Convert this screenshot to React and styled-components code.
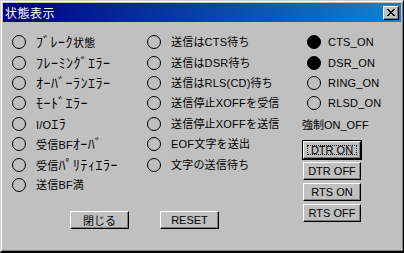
import React from "react";
import styled, { createGlobalStyle } from "styled-components";

const leftItems = [
  "ﾌﾞﾚｰｸ状態",
  "ﾌﾚｰﾐﾝｸﾞｴﾗｰ",
  "ｵｰﾊﾞｰﾗﾝｴﾗｰ",
  "ﾓｰﾄﾞｴﾗｰ",
  "I/Oｴﾗ",
  "受信BFｵｰﾊﾞ",
  "受信ﾊﾟﾘﾃｨｴﾗｰ",
  "送信BF満",
];

const middleItems = [
  "送信はCTS待ち",
  "送信はDSR待ち",
  "送信はRLS(CD)待ち",
  "送信停止XOFFを受信",
  "送信停止XOFFを送信",
  "EOF文字を送出",
  "文字の送信待ち",
];

const lineItems = [
  { label: "CTS_ON", on: true },
  { label: "DSR_ON", on: true },
  { label: "RING_ON", on: false },
  { label: "RLSD_ON", on: false },
];

const forceButtons = ["DTR ON", "DTR OFF", "RTS ON", "RTS OFF"];

const renderText = (text) =>
  text.split(/([\uFF61-\uFF9F]+)/).map((part, i) =>
    /[\uFF61-\uFF9F]/.test(part) ? <Kana key={i}>{part}</Kana> : part
  );

export default function App() {
  return (
    <>
      <GlobalStyle />
      <Window>
        <TitleBar>
          <Title>状態表示</Title>
          <CloseButton>
            <svg width="8" height="7" viewBox="0 0 8 7">
              <path d="M0 0h2v1h1v1h2V1h1V0h2v1H7v1H6v1H5v1h1v1h1v1h1v1H6V6H5V5H3v1H2v1H0V6h1V5h1V4h1V3H2V2H1V1H0z" fill="#000" />
            </svg>
          </CloseButton>
        </TitleBar>
        <Body>
          <MainArea>
            <StatusGrid>
              <Column>
                {leftItems.map((t) => (
                  <Indicator key={t}>
                    <Lamp />
                    <Label>{renderText(t)}</Label>
                  </Indicator>
                ))}
              </Column>
              <Column>
                {middleItems.map((t) => (
                  <Indicator key={t}>
                    <Lamp />
                    <Label>{renderText(t)}</Label>
                  </Indicator>
                ))}
              </Column>
            </StatusGrid>
            <BottomRow>
              <Button>閉じる</Button>
              <Button>RESET</Button>
            </BottomRow>
          </MainArea>
          <SideArea>
            <LineColumn>
              {lineItems.map((l) => (
                <Indicator key={l.label}>
                  <Lamp $on={l.on} />
                  <Label>{l.label}</Label>
                </Indicator>
              ))}
            </LineColumn>
            <GroupCaption>強制ON_OFF</GroupCaption>
            <ButtonStack>
              {forceButtons.map((b, i) => (
                <Button key={b} $default={i === 0} $wide>
                  {i === 0 ? <Focus>{b}</Focus> : b}
                </Button>
              ))}
            </ButtonStack>
          </SideArea>
        </Body>
      </Window>
    </>
  );
}

const GlobalStyle = createGlobalStyle`
  html, body {
    margin: 0;
    padding: 0;
    background: #c0c0c0;
  }
  body {
    font-family: "Liberation Sans", "Noto Sans CJK JP", sans-serif;
    font-size: 11px;
  }
`;

const Window = styled.div`
  box-sizing: border-box;
  width: 404px;
  height: 253px;
  background: #c0c0c0;
  border-top: 1px solid #d4d0c8;
  border-left: 1px solid #d4d0c8;
  border-right: 1px solid #000;
  border-bottom: 2px solid #000;
  box-shadow: inset 1px 1px 0 #fff, inset -1px -1px 0 #808080;
  padding: 2px;
  display: flex;
  flex-direction: column;
`;

const TitleBar = styled.div`
  height: 19px;
  display: flex;
  align-items: center;
  justify-content: space-between;
  padding: 0 2px 0 2px;
  background: linear-gradient(to right, #000080, #1084d0);
`;

const Title = styled.span`
  color: #fff;
  font-family: "Noto Sans CJK JP", sans-serif;
  font-size: 12px;
  letter-spacing: 0.5px;
`;

const CloseButton = styled.div`
  box-sizing: border-box;
  width: 16px;
  height: 14px;
  background: #c0c0c0;
  border-top: 1px solid #fff;
  border-left: 1px solid #fff;
  border-right: 1px solid #000;
  border-bottom: 1px solid #000;
  box-shadow: inset -1px -1px 0 #808080;
  display: flex;
  align-items: center;
  justify-content: center;
`;

const Body = styled.div`
  flex: 1;
  display: flex;
  padding: 10px 0 0 9px;
`;

const MainArea = styled.div`
  width: 290px;
  display: flex;
  flex-direction: column;
`;

const StatusGrid = styled.div`
  display: grid;
  grid-template-columns: 135px 155px;
`;

const Column = styled.div`
  display: flex;
  flex-direction: column;
`;

const Indicator = styled.div`
  height: 20.4px;
  display: flex;
  align-items: center;
  gap: 10px;
`;

const Lamp = styled.span`
  box-sizing: border-box;
  width: 14px;
  height: 14px;
  border-radius: 50%;
  border: 1px solid #000;
  background: ${(p) => (p.$on ? "#000" : "transparent")};
  flex-shrink: 0;
`;

const Label = styled.span`
  color: #000;
  font-family: "Liberation Sans", "Noto Sans CJK JP", sans-serif;
  font-size: 11px;
  line-height: 14px;
  letter-spacing: 0.2px;
  white-space: nowrap;
`;

const Kana = styled.span`
  font-family: "Noto Sans CJK JP", sans-serif;
  font-size: 14px;
  line-height: 14px;
  letter-spacing: 0.5px;
`;

const BottomRow = styled.div`
  display: flex;
  gap: 31px;
  margin: 16px 0 0 58px;
`;

const Button = styled.div`
  box-sizing: border-box;
  width: ${(p) => (p.$wide ? "58px" : "59px")};
  height: 18px;
  display: flex;
  align-items: center;
  justify-content: center;
  background: #c0c0c0;
  color: #000;
  font-family: "Liberation Sans", "Noto Sans CJK JP", sans-serif;
  font-size: 11px;
  border-top: 1px solid #fff;
  border-left: 1px solid #fff;
  border-right: 1px solid #000;
  border-bottom: 1px solid #000;
  box-shadow: inset -1px -1px 0 #808080;
  outline: ${(p) => (p.$default ? "1px solid #000" : "none")};
`;

const Focus = styled.span`
  box-sizing: border-box;
  width: calc(100% - 6px);
  height: calc(100% - 6px);
  display: flex;
  align-items: center;
  justify-content: center;
  border: 1px dotted #000;
`;

const SideArea = styled.div`
  display: flex;
  flex-direction: column;
`;

const LineColumn = styled.div`
  display: flex;
  flex-direction: column;
  padding-left: 5px;

  ${Indicator} {
    gap: 7px;
  }
`;

const GroupCaption = styled.div`
  font-family: "Liberation Sans", "Noto Sans CJK JP", sans-serif;
  font-size: 11px;
  height: 20px;
  display: flex;
  align-items: center;
`;

const ButtonStack = styled.div`
  display: flex;
  flex-direction: column;
  gap: 3px;
  margin-top: 7px;
  padding-left: 1px;
`;
